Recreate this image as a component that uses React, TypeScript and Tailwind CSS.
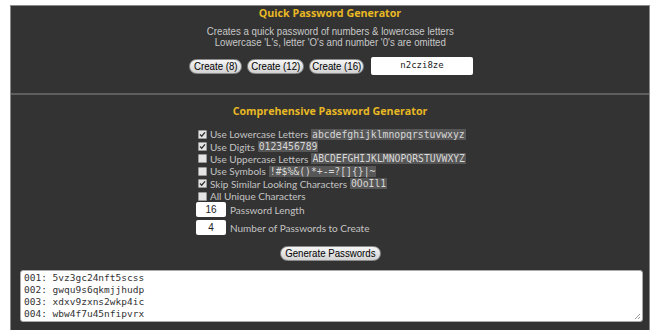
import React from 'react';

const OPTIONS = [
  { label: 'Use Lowercase Letters', checked: true, sample: 'abcdefghijklmnopqrstuvwxyz' },
  { label: 'Use Digits', checked: true, sample: '0123456789' },
  { label: 'Use Uppercase Letters', checked: false, sample: 'ABCDEFGHIJKLMNOPQRSTUVWXYZ' },
  { label: 'Use Symbols', checked: false, sample: '!#$%&()*+-=?[]{}|~' },
  { label: 'Skip Similar Looking Characters', checked: true, sample: '0OoIl1' },
  { label: 'All Unique Characters', checked: false, sample: '' },
];

const PASSWORDS = ['5vz3gc24nft5scss', 'gwqu9s6qkmjjhudp', 'xdxv9zxns2wkp4ic', 'wbw4f7u45nfipvrx'];

const Box: React.FC<{ checked: boolean }> = ({ checked }) => (
  <span className="w-[9px] h-[9px] bg-[#e4e4e4] border border-[#9a9a9a] rounded-[1px] flex items-center justify-center mr-[3px] shrink-0">
    {checked && (
      <svg width="7" height="7" viewBox="0 0 7 7">
        <path d="M1 3.6 L2.7 5.2 L6 1.4" stroke="#333" strokeWidth="1.4" fill="none" />
      </svg>
    )}
  </span>
);

// the page's sans text is narrow, so the label is squeezed sideways
const PillButton: React.FC<{ children: React.ReactNode; className: string }> = ({ children, className }) => (
  <button
    className={`flex items-center justify-center rounded-full border border-[#8c8c8c] bg-gradient-to-b from-[#f6f6f6] to-[#d2d2d2] text-black text-[11px] leading-none font-['Liberation_Sans',sans-serif] whitespace-nowrap ${className}`}
  >
    <span className="inline-block scale-x-[0.88]">{children}</span>
  </button>
);

export default function App() {
  return (
    <div className="w-[660px] h-[330px] bg-white overflow-hidden pt-[5px] px-[10px]">
      <div className="bg-[#333] border border-[#8a8a8a] h-[340px] flex flex-col">
        <div className="flex flex-col items-center h-[87px]">
          <h1 className="text-[10.7px] leading-[14px] font-bold text-[#e8b923] font-['Open_Sans',sans-serif]">
            Quick Password Generator
          </h1>
          <p className="mt-[6px] scale-x-[0.88] text-[11px] leading-[11px] text-[#c8c8c8] text-center whitespace-nowrap font-['Liberation_Sans',sans-serif]">
            Creates a quick password of numbers &amp; lowercase letters
            <br />
            Lowercase 'L's, letter 'O's and number '0's are omitted
          </p>
          <div className="mt-[9px] flex items-center gap-[5px] pl-[2px]">
            <PillButton className="w-[53px] h-[15px]">Create (8)</PillButton>
            <PillButton className="w-[57px] h-[15px]">Create (12)</PillButton>
            <PillButton className="w-[55px] h-[15px]">Create (16)</PillButton>
            <div className="ml-[2px] w-[102px] h-[18px] bg-white rounded-[2px] flex items-center justify-center text-[9px] text-[#222] font-['DejaVu_Sans_Mono',monospace]">
              n2czi8ze
            </div>
          </div>
        </div>
        <div className="h-[2px] bg-[#5e5e5e]" />
        <div className="flex flex-col items-center">
          <h2 className="mt-[9px] text-[10.7px] leading-[14px] font-bold text-[#e8b923] font-['Open_Sans',sans-serif]">
            Comprehensive Password Generator
          </h2>
          <div className="mt-[10px] ml-[2px] flex flex-col items-start text-[10px] text-[#c4c4c4] font-['Lato',sans-serif]">
            {OPTIONS.map((o) => (
              <div key={o.label} className="flex items-center h-[12.4px] pl-[2px]">
                <Box checked={o.checked} />
                <span className="leading-none">{o.label}</span>
                {o.sample && (
                  <span className="ml-[3px] px-[1px] bg-[#575757] text-[#d8d8d8] text-[9.75px] leading-[11px] font-['DejaVu_Sans_Mono',monospace]">
                    {o.sample}
                  </span>
                )}
              </div>
            ))}
            <div className="flex items-center">
              <div className="w-[30px] h-[15px] bg-white rounded-[2px] flex items-center justify-center text-[10px] text-[#222] font-['Liberation_Sans',sans-serif]">
                16
              </div>
              <span className="ml-[4px] leading-none">Password Length</span>
            </div>
            <div className="mt-[3px] flex items-center">
              <div className="w-[30px] h-[15px] bg-white rounded-[2px] flex items-center justify-center text-[10px] text-[#222] font-['Liberation_Sans',sans-serif]">
                4
              </div>
              <span className="ml-[4px] leading-none">Number of Passwords to Create</span>
            </div>
          </div>
          <PillButton className="mt-[11px] w-[101px] h-[15px]">Generate Passwords</PillButton>
          <div className="relative mt-[9px] self-start ml-[9px] w-[623px] h-[52px] bg-white rounded-[3px] border border-[#aaa] pl-[3px] pt-[1px] text-[9.5px] leading-[12px] text-[#333] font-['DejaVu_Sans_Mono',monospace]">
            {PASSWORDS.map((p, i) => (
              <div key={p}>{`00${i + 1}: ${p}`}</div>
            ))}
            <svg className="absolute right-[1px] bottom-[1px]" width="7" height="7" viewBox="0 0 7 7">
              <path d="M6 1 L1 6 M6 4 L4 6" stroke="#999" strokeWidth="1" />
            </svg>
          </div>
        </div>
      </div>
    </div>
  );
}
